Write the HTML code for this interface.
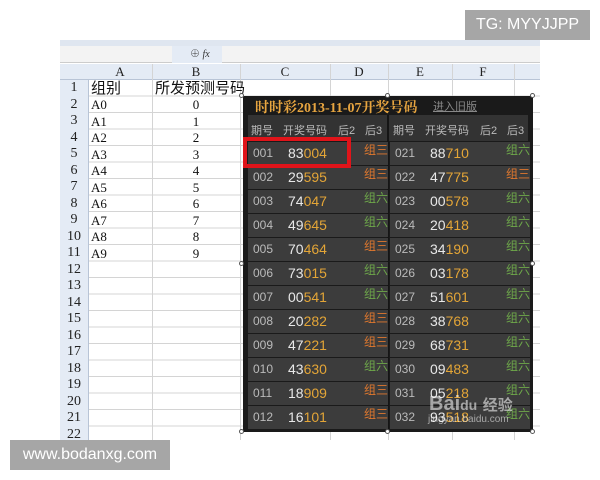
<!DOCTYPE html>
<html><head><meta charset="utf-8"><style>
*{margin:0;padding:0;box-sizing:border-box}
body{width:600px;height:480px;background:#fff;position:relative;overflow:hidden;font-family:"Liberation Serif","Noto Serif CJK SC",serif}
.a{position:absolute;white-space:nowrap}
.tg{left:465px;top:10px;width:125px;height:30px;background:#a6a6a6;color:#fff;font:16px "Liberation Sans",sans-serif;line-height:30px;text-align:center}
.wm{left:10px;top:440px;width:160px;height:30px;background:#a6a6a6;color:#fff;font:16px "Liberation Sans",sans-serif;line-height:30px;text-align:center}
.grid{left:89px;top:80px;width:451px;height:360px;background:
repeating-linear-gradient(to bottom,transparent 0,transparent 15.5px,#d4d4d4 15.5px,#d4d4d4 16.5px)}
.vl{top:64px;width:1px;height:376px;background:#d4d4d4}
.rh{left:60px;top:80px;width:29px;height:360px;background:#e4ebf5;border-right:1px solid #b8c4d6}
.rh div{height:16.5px;font-size:14px;line-height:16.5px;text-align:center;color:#222}
.ch{left:60px;top:64px;width:480px;height:16px;background:#e4ebf5;border-bottom:1px solid #b8c4d6;font-size:13px;line-height:16px;color:#222}
.ch span{position:absolute;top:0;text-align:center}
.cell{font-size:13px;line-height:16.5px;color:#111}
.panel{left:243px;top:96px;width:290px;height:336px;background:#1a1a1a}
.row{position:absolute;height:23px;background:#3c3c3c;font-family:"Liberation Sans","Noto Sans CJK SC",sans-serif;font-size:12px;line-height:23px;white-space:nowrap}
.row span{position:absolute;top:0;white-space:nowrap}
.q{color:#bbb}.n{color:#e8e8e8;font-size:14px}.n b{font-weight:normal;color:#e3a537}
.z3{color:#e0782e}.z6{color:#6ea84a}
.hd{color:#bbb;font-family:"Liberation Sans","Noto Sans CJK SC",sans-serif;font-size:11px}
.h{position:absolute;width:5px;height:5px;border:1px solid #555;border-radius:50%;background:#fff}
</style></head><body>
<div class="a tg">TG: MYYJJPP</div>
<div class="a" style="left:60px;top:40px;width:480px;height:6px;background:#dfe6f0"></div>
<div class="a" style="left:60px;top:46px;width:480px;height:17px;background:#f3f3f3;border-bottom:1px solid #ccc"></div>
<div class="a" style="left:172px;top:46px;width:50px;height:17px;background:#e4ebf5;font-size:10px;color:#333;line-height:17px;padding-left:18px">⊕ <i>fx</i></div>
<div class="a ch"><span style="left:28px;width:64px">A</span><span style="left:92px;width:88px">B</span><span style="left:180px;width:90px">C</span><span style="left:270px;width:58px">D</span><span style="left:328px;width:64px">E</span><span style="left:392px;width:62px">F</span></div>
<div class="a grid"></div>
<div class="a vl" style="left:152px"></div><div class="a vl" style="left:240px"></div><div class="a vl" style="left:330px"></div><div class="a vl" style="left:388px"></div><div class="a vl" style="left:452px"></div><div class="a vl" style="left:514px"></div>
<div class="a rh"><div>1</div><div>2</div><div>3</div><div>4</div><div>5</div><div>6</div><div>7</div><div>8</div><div>9</div><div>10</div><div>11</div><div>12</div><div>13</div><div>14</div><div>15</div><div>16</div><div>17</div><div>18</div><div>19</div><div>20</div><div>21</div><div>22</div></div>
<div class="a cell" style="left:91px;top:80px;font-size:15px;font-family:'Noto Sans CJK SC',sans-serif">组别</div>
<div class="a cell" style="left:155px;top:80px;font-size:15px;font-family:'Noto Sans CJK SC',sans-serif">所发预测号码</div>
<div class="a cell" style="left:91px;top:97px;line-height:16.5px">A0<br>A1<br>A2<br>A3<br>A4<br>A5<br>A6<br>A7<br>A8<br>A9</div>
<div class="a cell" style="left:152px;width:88px;text-align:center;top:97px">0<br>1<br>2<br>3<br>4<br>5<br>6<br>7<br>8<br>9</div>
<div class="a panel">
<div class="a" style="left:12px;top:1px;font:bold 14px 'Liberation Serif','Noto Serif CJK SC',serif;color:#e7a540">时时彩2013-11-07开奖号码</div>
<div class="a" style="left:190px;top:2px;font-size:11px;color:#888;text-decoration:underline;font-family:'Noto Sans CJK SC',sans-serif">进入旧版</div>
<div class="a" style="left:5px;top:19px;width:280px;height:26px;background:#333"></div>
<div class="a hd" style="left:8px;top:26px">期号</div><div class="a hd" style="left:40px;top:26px">开奖号码</div><div class="a hd" style="left:95px;top:26px">后2</div><div class="a hd" style="left:122px;top:26px">后3</div>
<div class="a hd" style="left:150px;top:26px">期号</div><div class="a hd" style="left:182px;top:26px">开奖号码</div><div class="a hd" style="left:237px;top:26px">后2</div><div class="a hd" style="left:264px;top:26px">后3</div>
<div class="a" style="left:144px;top:19px;width:2px;height:316px;background:#151515"></div>
</div>
<div id="rows"></div>
<div class="a" style="left:243px;top:137px;width:108px;height:31px;border:4px solid #e0141a"></div>
<div class="h" style="left:239px;top:93px"></div><div class="h" style="left:385px;top:93px"></div><div class="h" style="left:530px;top:93px"></div>
<div class="h" style="left:239px;top:261px"></div><div class="h" style="left:530px;top:261px"></div>
<div class="h" style="left:239px;top:429px"></div><div class="h" style="left:385px;top:429px"></div><div class="h" style="left:530px;top:429px"></div>
<div class="a" style="left:429px;top:393px;font:bold 20px 'Liberation Sans',sans-serif;color:rgba(255,255,255,.55)">Bai<span style="font-size:14px">du</span> <span style="font-family:'Noto Sans CJK SC',sans-serif;font-size:15px">经验</span></div>
<div class="a" style="left:428px;top:414px;font:10px 'Liberation Sans',sans-serif;color:rgba(255,255,255,.55)">jingyan.baidu.com</div>
<div class="a wm">www.bodanxg.com</div>
<script>
var L=[["001","83","004","三"],["002","29","595","三"],["003","74","047","六"],["004","49","645","六"],["005","70","464","三"],["006","73","015","六"],["007","00","541","六"],["008","20","282","三"],["009","47","221","三"],["010","43","630","六"],["011","18","909","三"],["012","16","101","三"]];
var R=[["021","88","710","六"],["022","47","775","三"],["023","00","578","六"],["024","20","418","六"],["025","34","190","六"],["026","03","178","六"],["027","51","601","六"],["028","38","768","六"],["029","68","731","六"],["030","09","483","六"],["031","05","218","六"],["032","93","518","六"]];
var h="";
function r(d,x,y){return '<div class="row" style="left:'+x+'px;top:'+y+'px;width:140px"><span class="q" style="left:5px">'+d[0]+'</span><span class="n" style="left:40px">'+d[1]+'<b>'+d[2]+'</b></span><span class="'+(d[3]=="三"?"z3":"z6")+'" style="left:116px;top:-3px">组'+d[3]+'</span></div>';}
for(var i=0;i<12;i++){var y=142+i*24;h+=r(L[i],248,y)+r(R[i],390,y);}
document.getElementById("rows").innerHTML=h;
</script>
</body></html>
